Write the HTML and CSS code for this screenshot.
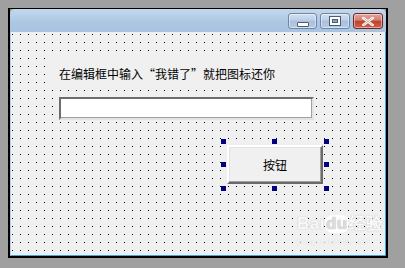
FILE: index.html
```html
<!DOCTYPE html>
<html lang="zh">
<head>
<meta charset="utf-8">
<link rel="stylesheet" href="styles.css">
</head>
<body>
<div class="window">
  <div class="titlebar">
    <div class="caption-btn min"><span class="min-icon"></span></div>
    <div class="caption-btn max"><span class="max-icon"></span></div>
    <div class="caption-btn close">
      <svg width="12" height="9" viewBox="0 0 12 9"><path d="M1.5 1 L10.5 8 M10.5 1 L1.5 8" stroke="#fff" stroke-width="2.6" stroke-linecap="square"/><path d="M1.5 1 L10.5 8 M10.5 1 L1.5 8" stroke="#4a1a14" stroke-width="0.6" opacity="0.5" fill="none"/></svg>
    </div>
  </div>
  <div class="client">
    <div class="label">在编辑框中输入<span class="q">“</span>我错了<span class="q">”</span>就把图标还你</div>
    <div class="edit"></div>
    <div class="btn-wrap">
      <div class="button">按钮</div>
      <span class="handle h-tl"></span><span class="handle h-tc"></span><span class="handle h-tr"></span>
      <span class="handle h-ml"></span><span class="handle h-mr"></span>
      <span class="handle h-bl"></span><span class="handle h-bc"></span><span class="handle h-br"></span>
    </div>
    <div class="watermark">
      <div class="wm-logo">Bai<span class="wm-du">du</span>经验</div>
      <div class="wm-url">jingyan.baidu.com</div>
    </div>
  </div>
</div>
</body>
</html>
```

FILE: styles.css
```css
html, body {
  margin: 0;
  padding: 0;
}
body {
  background: #a0a0a0;
  width: 405px;
  height: 268px;
  overflow: hidden;
  font-family: "Noto Sans CJK SC", "Noto Sans", sans-serif;
}
.window {
  margin: 8px 0 0 8px;
  width: 376px;
  height: 247px;
  border: 2px solid #000;
  border-top-width: 1px;
  display: flex;
  flex-direction: column;
  background: #a0a0a0;
}
.titlebar {
  height: 23px;
  border-radius: 5px 5px 0 0;
  background: linear-gradient(#c4d8ed, #adc7e3 55%, #a9c3e1);
  display: flex;
  justify-content: flex-end;
  align-items: flex-start;
  gap: 3px;
  padding: 4px 3px 0 0;
  box-sizing: border-box;
}
.caption-btn {
  width: 30px;
  height: 16px;
  box-sizing: border-box;
  border: 1px solid #6f87a6;
  border-radius: 3px;
  display: flex;
  align-items: center;
  justify-content: center;
  background: linear-gradient(#d3e0ef, #bccfe6 45%, #a8bfdc 50%, #b6cbe4);
  box-shadow: inset 0 0 0 1px rgba(255,255,255,0.45);
}
.caption-btn.min { width: 29px; }
.caption-btn.close {
  border-color: #6e2a22;
  background: linear-gradient(#e3a79e, #d67d6e 45%, #c2412c 50%, #d0604d);
}
.min-icon {
  width: 10px;
  height: 3px;
  margin-top: 6px;
  background: #fff;
  border: 1px solid #4b5d75;
  border-radius: 1px;
}
.max-icon {
  width: 6px;
  height: 4px;
  border: 2px solid #fff;
  outline: 1px solid #4b5d75;
  background: #8ea6c4;
  box-shadow: inset 0 0 0 1px #4b5d75;
}
.client {
  flex: 1;
  position: relative;
  border-left: 1px solid #b9d2ec;
  border-right: 1px solid #3fa6e4;
  border-bottom: 1px solid #3fa6e4;
  background:
    linear-gradient(90deg, transparent 1px, #f0f0f0 1px) 1px 2px / 8px 8px,
    linear-gradient(180deg, transparent 1px, #f0f0f0 1px) 1px 2px / 8px 8px,
    #000;
  display: flex;
  flex-direction: column;
  align-items: flex-start;
}
.label {
  margin: 20px 0 0 36px;
  width: 275px;
  height: 34px;
  box-sizing: border-box;
  padding: 14px 0 0 12px;
  background: #f0f0f0;
  font-size: 12px;
  line-height: 16px;
  color: #000;
  white-space: nowrap;
}
.q {
  display: inline-block;
  width: 12px;
}
.q:first-child, .label .q:nth-of-type(1) {
  text-align: right;
}
.label .q:nth-of-type(2) {
  text-align: left;
}
.edit {
  margin: 11px 0 0 48px;
  width: 255px;
  height: 23px;
  box-sizing: border-box;
  background: #fff;
  border-style: solid;
  border-width: 2px;
  border-color: #6d6d6d #e3e3e3 #e3e3e3 #6d6d6d;
  box-shadow: -1px -1px 0 #a0a0a0 inset;
}
.btn-wrap {
  position: relative;
  margin: 25px 0 0 216px;
}
.button {
  width: 96px;
  height: 39px;
  box-sizing: border-box;
  background: #f0f0f0;
  border: 2px solid;
  border-color: #fff #6a6a6a #6a6a6a #fff;
  box-shadow: inset -1px -1px 0 #a0a0a0, inset 1px 1px 0 #e3e3e3;
  display: flex;
  align-items: center;
  justify-content: center;
  font-size: 12px;
  color: #000;
}
.handle {
  position: absolute;
  width: 5px;
  height: 5px;
  background: #000080;
}
.h-tl, .h-tc, .h-tr { top: -6px; }
.h-ml, .h-mr { top: 17px; }
.h-bl, .h-bc, .h-br { top: 41px; }
.h-tl, .h-ml, .h-bl { left: -6px; }
.h-tc, .h-bc { left: 45px; }
.h-tr, .h-mr, .h-br { left: 97px; }
.watermark {
  position: absolute;
  left: 286px;
  top: 183px;
  color: rgba(255,255,255,0.9);
  font-family: "Liberation Sans", sans-serif;
  pointer-events: none;
}
.wm-logo {
  font-size: 17px;
  font-weight: bold;
  line-height: 18px;
  letter-spacing: 0.5px;
  text-shadow: 0 0 1px #c8c8c8, 0 0 1px #c8c8c8;
}
.wm-du {
  display: inline-block;
  background: rgba(255,255,255,0.85);
  color: #dcdcdc;
  border-radius: 8px;
  padding: 0 1px;
}
.wm-url {
  font-size: 8px;
  line-height: 10px;
  margin-top: 4px;
  letter-spacing: 0.5px;
  text-shadow: 0 0 1px #c8c8c8;
}
```
